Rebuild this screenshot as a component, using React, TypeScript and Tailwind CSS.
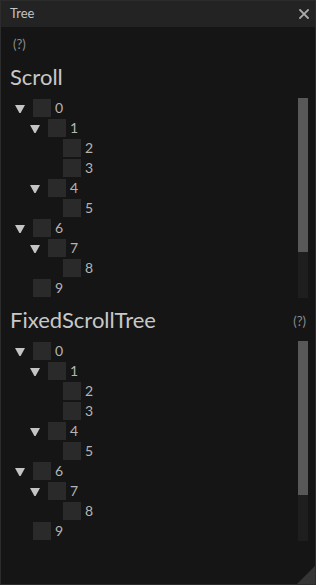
import React from 'react';

interface Node {
  label: string;
  level: number;
  open?: boolean;
}

const nodes: Node[] = [
  { label: '0', level: 0, open: true },
  { label: '1', level: 1, open: true },
  { label: '2', level: 2 },
  { label: '3', level: 2 },
  { label: '4', level: 1, open: true },
  { label: '5', level: 2 },
  { label: '6', level: 0, open: true },
  { label: '7', level: 1, open: true },
  { label: '8', level: 2 },
  { label: '9', level: 0 },
];

const indent = ['ml-0', 'ml-[15px]', 'ml-[30px]'];

function Caret() {
  return (
    <svg width="10" height="8" viewBox="0 0 10 8" className="mt-[1px]">
      <polygon points="0,0 10,0 5.6,8 4.4,8" fill="#c4c4c4" />
    </svg>
  );
}

function TreeRow({ node }: { node: Node }) {
  return (
    <div className="flex h-[20px] items-center">
      <div className={`flex items-center ${indent[node.level]}`}>
        <div className="flex w-[23px] items-center pl-[5px]">
          {node.open && <Caret />}
        </div>
        <div className="h-[18px] w-[18px] bg-[#2a2a2a]" />
        <span className="ml-[4px] text-[14px] leading-none text-[#b4b4b4] lining-nums">{node.label}</span>
      </div>
    </div>
  );
}

function ScrollTree() {
  return (
    <div className="flex h-[200px]">
      <div className="flex-1">
        {nodes.map((n) => (
          <TreeRow key={n.label} node={n} />
        ))}
      </div>
      {/* scrollbar */}
      <div className="flex h-full w-[10px] flex-col bg-[#1e1e1e]">
        <div className="h-[154px] bg-[#585858]" />
      </div>
    </div>
  );
}

export default function App() {
  return (
    <div
      className="relative flex h-[585px] w-[316px] flex-col border border-[#2c2c2c] bg-[#151515]"
      style={{ fontFamily: 'Lato, "Noto Sans", sans-serif' }}
    >
      {/* Title bar */}
      <div className="flex h-[26px] items-center justify-between bg-[#232323] pl-[9px] pr-[6px]">
        <span className="text-[13px] text-[#c4c4c4]">Tree</span>
        <svg width="10" height="10" viewBox="0 0 10 10">
          <path d="M1 1 L9 9 M9 1 L1 9" stroke="#aaaaaa" strokeWidth="1.8" strokeLinecap="square" />
        </svg>
      </div>

      <div className="flex flex-col pl-[9px] pr-[7px] pt-[9px]">
        <div className="pl-[3px] text-[13px] leading-[17px] text-[#8c8c8c]">(?)</div>

        <div className="mt-[10px] text-[22px] leading-[28px] text-[#c8c8c8]">Scroll</div>
        <div className="mt-[7px]">
          <ScrollTree />
        </div>

        <div className="mt-[8px] flex items-start justify-between">
          <span className="text-[22px] leading-[28px] text-[#c8c8c8]">FixedScrollTree</span>
          <span className="mr-[2px] mt-[7px] text-[13px] leading-[17px] text-[#8c8c8c]">(?)</span>
        </div>
        <div className="mt-[7px]">
          <ScrollTree />
        </div>
      </div>

      {/* resize grip */}
      <svg width="18" height="18" viewBox="0 0 18 18" className="absolute bottom-0 right-0">
        <polygon points="18,0 18,18 0,18" fill="#353535" />
      </svg>
    </div>
  );
}
